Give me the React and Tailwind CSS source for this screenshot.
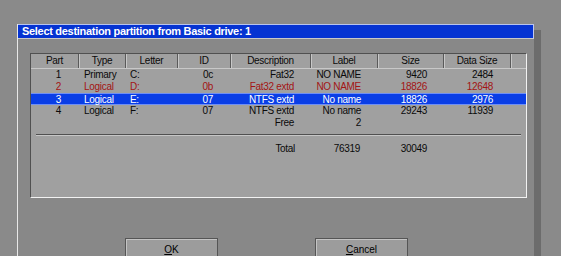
import React from "react";

const cols = "grid grid-cols-[48px_47px_52px_53px_80px_67px_66px_67px_15px]";

const rows = [
  { part: "1", type: "Primary", letter: "C:", id: "0c", desc: "Fat32", label: "NO NAME", size: "9420", data: "2484", tone: "normal" },
  { part: "2", type: "Logical", letter: "D:", id: "0b", desc: "Fat32 extd", label: "NO NAME", size: "18826", data: "12648", tone: "red" },
  { part: "3", type: "Logical", letter: "E:", id: "07", desc: "NTFS extd", label: "No name", size: "18826", data: "2976", tone: "sel" },
  { part: "4", type: "Logical", letter: "F:", id: "07", desc: "NTFS extd", label: "No name", size: "29243", data: "11939", tone: "normal" },
  { part: "", type: "", letter: "", id: "", desc: "Free", label: "2", size: "", data: "", tone: "normal" },
];

const headers = ["Part", "Type", "Letter", "ID", "Description", "Label", "Size", "Data Size", ""];

function Row({ r }) {
  const tone =
    r.tone === "sel"
      ? "bg-[#0a3ee6] text-white border-y border-[#6f8ff5]"
      : r.tone === "red"
      ? "text-[#a31414]"
      : "text-[#0a0a0a]";
  return (
    <div className={`${cols} h-[12px] items-center leading-[12px] ${tone}`}>
      <div className="text-right pr-[18px]">{r.part}</div>
      <div className="pl-[5px]">{r.type}</div>
      <div className="pl-[4px]">{r.letter}</div>
      <div className="text-right pr-[18px]">{r.id}</div>
      <div className="text-right pr-[17px] whitespace-nowrap">{r.desc}</div>
      <div className="text-right pr-[17px] whitespace-nowrap">{r.label}</div>
      <div className="text-right pr-[17px]">{r.size}</div>
      <div className="text-right pr-[18px]">{r.data}</div>
      <div />
    </div>
  );
}

function Button({ first, rest }) {
  return (
    <div className="w-[93px] h-[24px] bg-[#9c9c9c] border border-[#555] shadow-[inset_1px_1px_0_#c4c4c4] flex justify-center pt-[3px] text-[10px] text-black">
      <span>
        <span className="underline">{first}</span>
        {rest}
      </span>
    </div>
  );
}

export default function App() {
  return (
    <div
      className="w-[561px] h-[256px] overflow-hidden bg-[#8a8a8a] pt-[24px] pl-[17px]"
      style={{ fontFamily: '"Liberation Sans", Arial, sans-serif' }}
    >
      <div className="w-[517px] h-[240px] bg-[#888888] border-l border-[#e8e8e8] shadow-[7px_6px_0_#6c6c6c]">
        <div className="h-[15px] bg-[#0533d2] border-t border-[#b8c4ee] border-b border-b-[#c8c8c8] border-r border-r-[#c0c8f0] pl-[4px] text-white font-bold text-[11px] leading-[13px] tracking-[-0.3px] whitespace-nowrap">
          Select destination partition from Basic drive: 1
        </div>
        <div className="pl-[12px] pt-[14px]">
          <div className="w-[497px] h-[145px] bg-[#a0a0a0] border-t border-l border-[#505050] border-r border-b border-r-[#f2f2f2] border-b-[#f2f2f2] text-[10px] tracking-[-0.3px]">
            <div className={`${cols} h-[15px] border-b border-[#c8c8c8]`}>
              {headers.map((h, i) => (
                <div
                  key={i}
                  className={`text-center leading-[14px] text-[#0a0a0a] ${i < 8 ? "border-r border-[#5a5a5a] shadow-[1px_0_0_#c8c8c8]" : ""}`}
                >
                  {h}
                </div>
              ))}
            </div>
            {rows.map((r, i) => (
              <Row key={i} r={r} />
            ))}
            <div className="mx-[5px] mt-[5px] h-[2px] border-t border-[#505050] border-b border-b-[#c6c6c6]" />
            <div className={`${cols} h-[12px] mt-[7px] leading-[12px] text-[#0a0a0a]`}>
              <div />
              <div />
              <div />
              <div />
              <div className="text-right pr-[16px]">Total</div>
              <div className="text-right pr-[18px]">76319</div>
              <div className="text-right pr-[17px]">30049</div>
              <div />
              <div />
            </div>
          </div>
        </div>
        <div className="flex mt-[40px] pl-[107px] gap-[97px]">
          <Button first="O" rest="K" />
          <Button first="C" rest="ancel" />
        </div>
      </div>
    </div>
  );
}
